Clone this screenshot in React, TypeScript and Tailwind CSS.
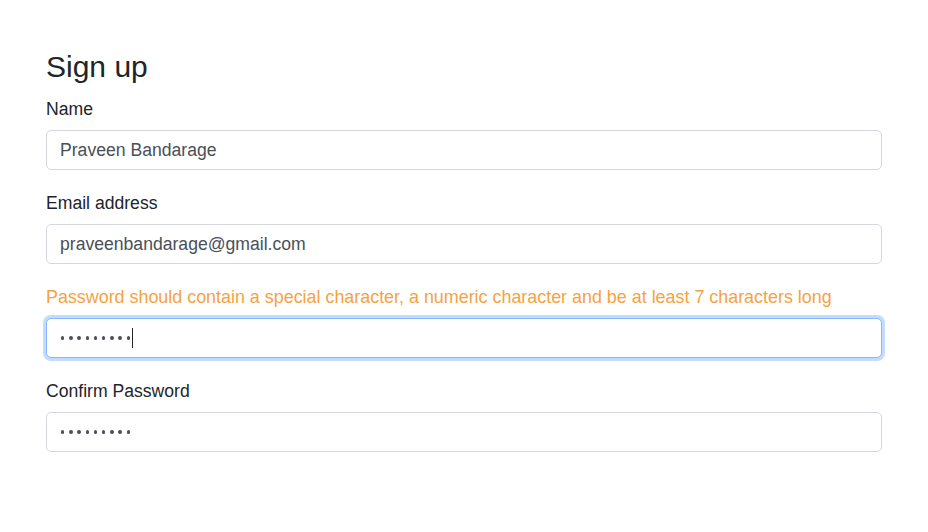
import React from "react";

const font = { fontFamily: '"Liberation Sans", Arial, sans-serif' };

function Field({ label, value, hint }: { label?: string; value: string; hint?: string }) {
  return (
    <div className="mb-[20px]">
      {label && <label className="mb-[8px] block text-[17.6px] leading-[26px] text-[#212529]">{label}</label>}
      {hint && <p className="mb-[8px] text-[17.9px] leading-[26px] text-[#f5a33f]">{hint}</p>}
      <input
        readOnly
        value={value}
        className="block h-[40px] w-full rounded-[5px] border border-[#d4d8dc] bg-white px-[13px] text-[17.6px] text-[#495057] outline-none"
      />
    </div>
  );
}

function SecretField({ label, hint, focused }: { label?: string; hint?: string; focused?: boolean }) {
  return (
    <div className="mb-[20px]">
      {label && <label className="mb-[8px] block text-[17.6px] leading-[26px] text-[#212529]">{label}</label>}
      {hint && <p className="mb-[8px] text-[17.9px] leading-[26px] text-[#f5a33f]">{hint}</p>}
      <div
        className={
          focused
            ? "flex h-[40px] w-full items-center rounded-[5px] border border-[#86b7fe] bg-white px-[14px] shadow-[0_0_0_3px_rgba(13,110,253,0.25)]"
            : "flex h-[40px] w-full items-center rounded-[5px] border border-[#d4d8dc] bg-white px-[14px]"
        }
      >
        <span className="flex gap-[4.8px]">
          {Array.from({ length: 9 }).map((_, i) => (
            <span key={i} className="h-[3.4px] w-[3.4px] rounded-full bg-[#495057]" />
          ))}
        </span>
        {focused && <span className="ml-[2px] h-[20px] w-px bg-[#212529]" />}
      </div>
    </div>
  );
}

export default function App() {
  return (
    <div className="min-h-screen bg-white px-[46px] pt-[50px]" style={font}>
      <h3 className="mb-[12px] text-[30px] font-medium leading-[34px] text-[#212529]">Sign up</h3>
      <form>
        <Field label="Name" value="Praveen Bandarage" />
        <Field label="Email address" value="praveenbandarage@gmail.com" />
        <SecretField
          hint="Password should contain a special character, a numeric character and be at least 7 characters long"
          focused
        />
        <SecretField label="Confirm Password" />
      </form>
    </div>
  );
}
